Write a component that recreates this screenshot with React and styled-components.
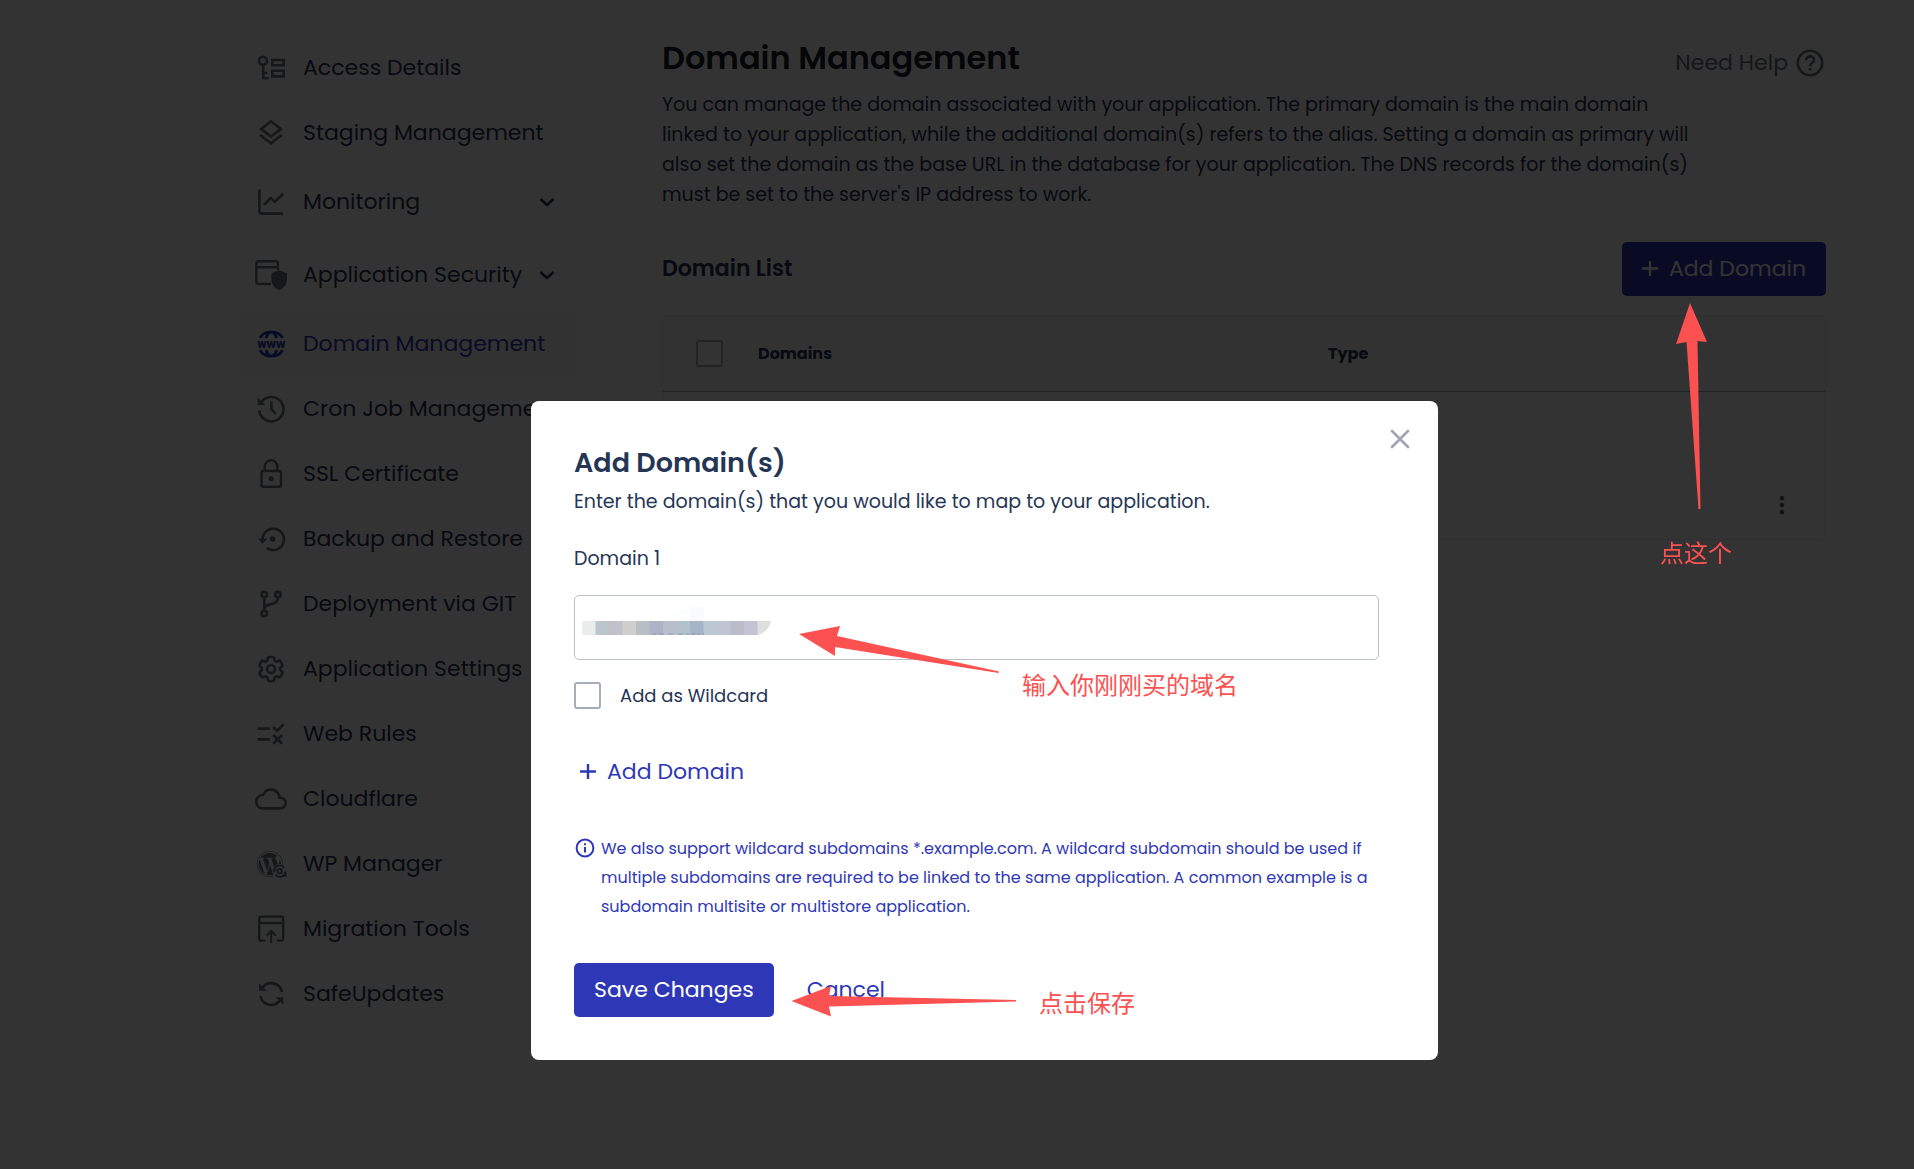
import React from "react";
import styled, { createGlobalStyle } from "styled-components";
import {
  MdOutlineLayers,
  MdRule,
  MdCloudQueue,
  MdMoreVert,
} from "react-icons/md";
import { HiOutlineCog6Tooth } from "react-icons/hi2";
import { FaWordpress } from "react-icons/fa";

const fontStack = `Poppins, Inter, "Noto Sans CJK SC", sans-serif`;
const navy = "#253655";
const blue = "#2e38b7";
const grey = "#69727d";
const red = "#fb5151";

const GlobalStyle = createGlobalStyle`
  * {
    box-sizing: border-box;
  }
  body {
    margin: 0;
    background: #fff;
    color: ${navy};
    font-family: ${fontStack};
  }
  h1, h2, p {
    margin: 0;
  }
  button, input {
    font-family: inherit;
  }
`;

const Page = styled.div`
  display: grid;
  grid-template-columns: 338px 1fr;
  column-gap: 86px;
  min-height: 100vh;
  padding: 0 88px 0 238px;
`;

/* Sidebar */

const Sidebar = styled.nav`
  display: flex;
  flex-direction: column;
  gap: 1px;
  padding: 36px 0;
`;

const NavItem = styled.a`
  display: flex;
  align-items: center;
  width: 100%;
  height: ${({ $tall }) => ($tall ? 72 : 64)}px;
  padding: 0 18px 0 17px;
  border: 0;
  border-radius: 5px;
  background: ${({ $active }) => ($active ? "#f8f8f9" : "transparent")};
  color: ${({ $active }) => ($active ? blue : navy)};
  font-size: 22px;
  line-height: 30px;
  text-align: left;
  text-decoration: none;
  white-space: nowrap;
  cursor: pointer;
  & > svg {
    flex: none;
    color: ${({ $active }) => ($active ? blue : grey)};
  }
  & > span {
    margin-left: 16px;
  }
  & > span + svg {
    margin-left: auto;
    color: ${navy};
  }
`;

/* Main column */

const Main = styled.main`
  min-width: 0;
  padding: 38px 0;
`;

const Header = styled.header`
  display: flex;
  justify-content: space-between;
  align-items: flex-start;
`;

const PageTitle = styled.h1`
  color: #1a1e26;
  font-size: 32px;
  font-weight: 600;
  line-height: 40px;
`;

const HelpLink = styled.a`
  display: flex;
  align-items: center;
  gap: 8px;
  padding: 10px 2px 0 0;
  color: ${grey};
  font-size: 22px;
  line-height: 30px;
  text-decoration: none;
`;

const Description = styled.p`
  max-width: 1036px;
  margin-top: 12px;
  font-size: 19px;
  line-height: 30px;
`;

const ListBar = styled.div`
  display: flex;
  justify-content: space-between;
  align-items: center;
  margin-top: 32px;
`;

const ListTitle = styled.h2`
  font-size: 22px;
  font-weight: 600;
  line-height: 30px;
`;

const Anchor = styled.div`
  position: relative;
`;

const PrimaryButton = styled.button`
  display: flex;
  align-items: center;
  gap: 11px;
  height: 54px;
  padding: 0 20px;
  border: 0;
  border-radius: 5px;
  background: ${blue};
  color: #fff;
  font-size: 22px;
  line-height: 30px;
  white-space: nowrap;
  cursor: pointer;
`;

const TableFrame = styled.div`
  margin-top: 19px;
  border: 1px solid #e8e9eb;
  border-radius: 5px;
  overflow: hidden;
`;

const DomainTable = styled.table`
  width: 100%;
  border-collapse: collapse;
  table-layout: fixed;
  font-size: 16px;
  text-align: left;
  th {
    height: 75px;
    padding: 0;
    background: #fafafa;
    border-bottom: 1px solid #a0a3a8;
    font-weight: 700;
  }
  td {
    height: 148px;
    padding: 0;
  }
`;

const CheckCell = styled.th`
  width: 95px;
`;

const TypeCell = styled.th`
  width: 420px;
`;

const ActionCell = styled.th`
  width: 77px;
`;

const MoreButton = styled.button`
  display: flex;
  margin: 80px 0 0 20px;
  padding: 0;
  border: 0;
  background: none;
  color: #565b63;
  cursor: pointer;
`;

const Checkbox = styled.input`
  appearance: none;
  display: block;
  flex: none;
  width: 27px;
  height: 27px;
  margin: 0;
  border: 2px solid #a5adb8;
  border-radius: 3px;
  background: #fff;
  th & {
    margin-left: 33px;
  }
`;

/* Dialog */

const Overlay = styled.div`
  position: fixed;
  inset: 0;
  display: flex;
  justify-content: center;
  align-items: flex-start;
  padding: 401px 0 0 55px;
  background: rgba(0, 0, 0, 0.8);
`;

const Dialog = styled.form`
  position: relative;
  width: 100%;
  max-width: 907px;
  padding: 44px 59px 43px 43px;
  border-radius: 8px;
  background: #fff;
`;

const CloseButton = styled.button`
  position: absolute;
  top: 28px;
  right: 28px;
  display: flex;
  padding: 0;
  border: 0;
  background: none;
  color: #a0a7b3;
  cursor: pointer;
`;

const DialogTitle = styled.h2`
  font-size: 27px;
  font-weight: 600;
  line-height: 36px;
`;

const DialogText = styled.p`
  margin-top: 6px;
  font-size: 19px;
  line-height: 30px;
`;

const FieldLabel = styled.label`
  display: block;
  margin: 27px 0 21px;
  font-size: 19px;
  line-height: 30px;
`;

const Field = styled.div`
  position: relative;
`;

const TextInput = styled.input`
  display: block;
  width: 100%;
  height: 65px;
  padding: 0 16px;
  border: 1px solid #b9bfc9;
  border-radius: 5px;
  background: #fff;
  color: ${navy};
  font-size: 19px;
  outline: none;
`;

const Redaction = styled.svg`
  position: absolute;
  top: 12px;
  left: 8px;
`;

const CheckLabel = styled.label`
  display: flex;
  align-items: center;
  gap: 19px;
  margin-top: 22px;
  font-size: 18px;
  line-height: 27px;
`;

const TextButton = styled.button`
  display: flex;
  align-items: center;
  gap: 11px;
  padding: 0 6px;
  border: 0;
  background: none;
  color: ${blue};
  font-size: 22px;
  line-height: 30px;
  cursor: pointer;
`;

const AddRow = styled.div`
  margin-top: 48px;
`;

const Note = styled.p`
  display: flex;
  gap: 6px;
  margin-top: 47px;
  color: ${blue};
  font-size: 16px;
  line-height: 29px;
  & svg {
    flex: none;
    margin: 4px 0 0 1px;
  }
`;

const Actions = styled.div`
  display: flex;
  align-items: center;
  gap: 27px;
  margin-top: 42px;
`;

/* Hand-drawn hints over the page */

const Arrow = styled.svg`
  position: absolute;
  top: ${({ $top }) => $top}px;
  left: ${({ $left }) => $left}px;
  z-index: 2;
  fill: ${red};
  pointer-events: none;
`;

const Hint = styled.span`
  position: absolute;
  top: ${({ $top }) => $top}px;
  left: ${({ $left }) => $left}px;
  z-index: 2;
  color: ${red};
  font-family: "Noto Sans CJK SC", sans-serif;
  font-size: 24px;
  line-height: 30px;
  white-space: nowrap;
  pointer-events: none;
`;

/* Icons */

function Icon({ children, size = 32, width = 2.6 }) {
  return (
    <svg
      width={size}
      height={size}
      viewBox={`0 0 ${size} ${size}`}
      fill="none"
      stroke="currentColor"
      strokeWidth={width}
      aria-hidden="true"
    >
      {children}
    </svg>
  );
}

const AccessIcon = () => (
  <Icon>
    <circle cx="8" cy="8.8" r="4" />
    <path d="M8.2 13v14.3M8 21h4.3M8 26.2h5.6" />
    <path d="M17.3 8h11.4v5.2H17.3zM17.3 18.8h11.4v5.6H17.3z" />
  </Icon>
);

const MonitoringIcon = () => (
  <Icon>
    <path d="M4.4 3.6v21.6q0 2.4 2.4 2.4H28" />
    <path d="M9 18.8l6.6-6.8 4.2 3.8 8.4-8" />
  </Icon>
);

const SecurityIcon = () => (
  <Icon width={2.4}>
    <path d="M16 25H3.6Q1.4 25 1.4 22.8V4.4q0-2.2 2.2-2.2h17.2q2.2 0 2.2 2.2V11M1.4 8.2H23" />
    <path
      d="M24.2 11.2l7.8 3v6.2c0 4.8-3 8.8-7.8 10.6-4.8-1.8-7.8-5.8-7.8-10.6v-6.2z"
      fill="currentColor"
      stroke="none"
    />
  </Icon>
);

const DomainIcon = () => (
  <Icon width={2.8}>
    <path d="M5 9.8C7.4 5.6 11.3 3.8 16.3 3.8s8.900 1.800 11.300 6M11 10c1-3.400 3-6 5.300-6.200 2.300.2 4.300 2.800 5.300 6.200" />
    <path d="M5 22.2c2.400 4.200 6.300 6 11.300 6s8.900-1.800 11.300-6M11 22c1 3.400 3 6 5.300 6.200 2.300-.2 4.300-2.800 5.300-6.200" />
    <text
      x="16.3"
      y="20"
      textAnchor="middle"
      fontSize="13"
      fontWeight="900"
      fontFamily="Roboto, sans-serif"
      fill="currentColor"
      stroke="none"
    >
      www
    </text>
  </Icon>
);

const CronIcon = () => (
  <Icon>
    <path d="M4.2 17.5A12.2 12.2 0 1 0 6.8 8.6" />
    <path d="M2.6 4.4v7.6h7.8z" fill="currentColor" stroke="none" />
    <path d="M16.4 8.6v7.4l4.4 4.8" />
  </Icon>
);

const LockIcon = () => (
  <Icon width={2.4}>
    <rect x="6.5" y="13" width="19.4" height="15.8" rx="1.8" />
    <path d="M9.8 13V8.6a6.3 6.3 0 0 1 12.6 0V13" />
    <circle cx="16.2" cy="20.5" r="2.6" fill="currentColor" stroke="none" />
  </Icon>
);

const BackupIcon = () => (
  <Icon>
    <path d="M7.6 16.5a10.7 10.7 0 1 1 4 8.2" />
    <path d="M2.8 15.4h9.6l-4.8 5.4z" fill="currentColor" stroke="none" />
    <circle cx="17.6" cy="16" r="2.7" fill="currentColor" stroke="none" />
  </Icon>
);

const GitIcon = () => (
  <Icon>
    <circle cx="9.3" cy="6.6" r="2.7" />
    <circle cx="23" cy="6.6" r="2.7" />
    <circle cx="9.3" cy="25.5" r="2.7" />
    <path d="M9.3 9.4v13.3M23 9.4c0 4.2-2.600 5.700-6.400 6.600-3.400.8-6 1.400-7.300 3.600" />
  </Icon>
);

const WordpressIcon = () => (
  <Icon width={1.8}>
    <FaWordpress x="1.3" y="2.6" size={27} stroke="none" />
    <circle cx="24.7" cy="23.2" r="7.2" fill="#fff" stroke="none" />
    <circle cx="24.7" cy="23.2" r="2.2" />
    <path d="M19.2 23a5.5 5.5 0 0 1 10-3.2M30.2 23.5a5.5 5.5 0 0 1-9.8 3.3" />
    <path
      d="M17.4 21.6h4.2l-2.4 3.4zM31.8 24.8l-.4 4.2-4-.6z"
      fill="currentColor"
      stroke="none"
    />
  </Icon>
);

const MigrationIcon = () => (
  <Icon width={2.4}>
    <path d="M10.4 27.6H6.2q-2 0-2-2V5.600q0-2 2-2h20q2 0 2 2v20q0 2-2 2H22M4.2 10h24" />
    <path d="M16.2 30V18.400M11.400 22.800l4.800-4.800 4.800 4.800" strokeWidth="2" />
  </Icon>
);

const UpdatesIcon = () => (
  <Icon>
    <path d="M7 10.2A11 11 0 0 1 27 14M25.4 21.8A11 11 0 0 1 5.400 18" />
    <path
      d="M4 5.2v7.6h7.8zM28.4 26.8v-7.6h-7.8z"
      fill="currentColor"
      stroke="none"
    />
  </Icon>
);

const ChevronIcon = () => (
  <Icon size={22}>
    <path d="M4.5 8l6.5 6 6.5-6" strokeLinejoin="round" />
  </Icon>
);

const PlusIcon = () => (
  <Icon size={16} width={2.400}>
    <path d="M8 0v15M0 7.500h16" />
  </Icon>
);

const HelpIcon = () => (
  <Icon size={28}>
    <circle cx="14" cy="14" r="12.200" />
    <path d="M10.200 11.200c0-2.200 1.700-3.800 3.900-3.800s3.900 1.500 3.900 3.600c0 2.700-3.800 3-3.800 6.200" />
    <path d="M14.200 19v2.600" />
  </Icon>
);

const InfoIcon = () => (
  <Icon size={20} width={2}>
    <circle cx="10" cy="10" r="8.400" />
    <path d="M10 9v5.600M10 5.200v2" />
  </Icon>
);

const CloseIcon = () => (
  <Icon size={20} width={2.800}>
    <path d="M2 2l16 16M18 2L2 18" strokeLinecap="round" />
  </Icon>
);

const navItems = [
  { label: "Access Details", icon: <AccessIcon /> },
  { label: "Staging Management", icon: <MdOutlineLayers size={32} /> },
  { label: "Monitoring", icon: <MonitoringIcon />, expandable: true },
  { label: "Application Security", icon: <SecurityIcon />, expandable: true },
  { label: "Domain Management", icon: <DomainIcon />, active: true },
  { label: "Cron Job Management", icon: <CronIcon /> },
  { label: "SSL Certificate", icon: <LockIcon /> },
  { label: "Backup and Restore", icon: <BackupIcon /> },
  { label: "Deployment via GIT", icon: <GitIcon /> },
  {
    label: "Application Settings",
    icon: <HiOutlineCog6Tooth size={32} strokeWidth={2} />,
  },
  { label: "Web Rules", icon: <MdRule size={32} /> },
  { label: "Cloudflare", icon: <MdCloudQueue size={32} /> },
  { label: "WP Manager", icon: <WordpressIcon /> },
  { label: "Migration Tools", icon: <MigrationIcon /> },
  { label: "SafeUpdates", icon: <UpdatesIcon /> },
];

const blocks = [
  "#ebecee", "#bcc4cc", "#c2c0cb", "#cfcfd0", "#b9bdc4", "#adb3c4", "#b9bdcc",
  "#b3c1ca", "#a5b4c6", "#bdc7d4", "#c0c4d3", "#b9bdca", "#c3c3d3",
];

function RedactedValue() {
  return (
    <Redaction width="190" height="28" aria-hidden="true">
      <path d="M108 0h14v14h-14z" fill="#f9fbfe" />
      <path d="M95 4h13v10H95z" fill="#fcfdfe" />
      {blocks.map((color, i) => (
        <rect key={color} x={i * 13.5} y="14" width="14" height="14" fill={color} />
      ))}
      <path d="M175.5 14H189q-2 11-13.5 14z" fill="#dfdfe0" />
      <path
        d="M71 27h3M77 27h5M86 27h5M96 27h5M104 27h3M110 27h3M116 27h2M120 27h2"
        stroke="#8d97ad"
      />
    </Redaction>
  );
}

function SideNav() {
  return (
    <Sidebar aria-label="Application">
      {navItems.map(({ label, icon, active, expandable }) => (
        <NavItem
          key={label}
          as={expandable ? "button" : "a"}
          href={expandable ? undefined : "#"}
          type={expandable ? "button" : undefined}
          $active={active}
          $tall={expandable}
        >
          {icon}
          <span>{label}</span>
          {expandable && <ChevronIcon />}
        </NavItem>
      ))}
    </Sidebar>
  );
}

function DomainList() {
  return (
    <TableFrame>
      <DomainTable>
        <thead>
          <tr>
            <CheckCell>
              <Checkbox type="checkbox" aria-label="Select all domains" />
            </CheckCell>
            <th>Domains</th>
            <TypeCell>Type</TypeCell>
            <ActionCell aria-label="Actions" />
          </tr>
        </thead>
        <tbody>
          <tr>
            <td />
            <td />
            <td />
            <td>
              <MoreButton type="button" aria-label="More actions">
                <MdMoreVert size={28} />
              </MoreButton>
            </td>
          </tr>
        </tbody>
      </DomainTable>
    </TableFrame>
  );
}

function AddDomainDialog() {
  return (
    <Overlay>
      <Dialog role="dialog" aria-labelledby="dialog-title">
        <CloseButton type="button" aria-label="Close">
          <CloseIcon />
        </CloseButton>
        <DialogTitle id="dialog-title">Add Domain(s)</DialogTitle>
        <DialogText>
          Enter the domain(s) that you would like to map to your application.
        </DialogText>
        <FieldLabel htmlFor="domain-1">Domain 1</FieldLabel>
        <Field>
          <TextInput id="domain-1" type="text" />
          <RedactedValue />
        </Field>
        <CheckLabel htmlFor="wildcard">
          <Checkbox id="wildcard" type="checkbox" />
          Add as Wildcard
        </CheckLabel>
        <AddRow>
          <TextButton type="button">
            <PlusIcon />
            Add Domain
          </TextButton>
        </AddRow>
        <Note>
          <InfoIcon />
          <span>
            We also support wildcard subdomains *.example.com. A wildcard
            subdomain should be used if multiple subdomains are required to be
            linked to the same application. A common example is a subdomain
            multisite or multistore application.
          </span>
        </Note>
        <Actions>
          <PrimaryButton type="button">Save Changes</PrimaryButton>
          <TextButton type="button">Cancel</TextButton>
        </Actions>

        <Arrow $top={224} $left={267} width="203" height="52">
          <path d="M1 9L42 1l-3 10 162 35.5-.5 1.5L37 22v9z" />
        </Arrow>
        <Hint $top={268} $left={491}>
          输入你刚刚买的域名
        </Hint>
        <Arrow $top={584} $left={260} width="226" height="33">
          <path d="M.5 16L40 1l-2 10 187 4v1.5L38 21.5l2 10z" />
        </Arrow>
        <Hint $top={586} $left={508}>
          点击保存
        </Hint>
      </Dialog>
    </Overlay>
  );
}

export default function App() {
  return (
    <>
      <GlobalStyle />
      <Page>
        <SideNav />
        <Main>
          <Header>
            <PageTitle>Domain Management</PageTitle>
            <HelpLink href="#">
              Need Help
              <HelpIcon />
            </HelpLink>
          </Header>
          <Description>
            You can manage the domain associated with your application. The
            primary domain is the main domain linked to your application, while
            the additional domain(s) refers to the alias. Setting a domain as
            primary will also set the domain as the base URL in the database for
            your application. The DNS records for the domain(s) must be set to
            the server's IP address to work.
          </Description>
          <ListBar>
            <ListTitle>Domain List</ListTitle>
            <Anchor>
              <PrimaryButton type="button">
                <PlusIcon />
                Add Domain
              </PrimaryButton>
              <Arrow $top={61} $left={53} width="34" height="208">
                <path d="M15 0l17 39-9.5-1 3 168h-2L11.5 39 1 41z" />
              </Arrow>
              <Hint $top={295} $left={38}>
                点这个
              </Hint>
            </Anchor>
          </ListBar>
          <DomainList />
        </Main>
      </Page>
      <AddDomainDialog />
    </>
  );
}
